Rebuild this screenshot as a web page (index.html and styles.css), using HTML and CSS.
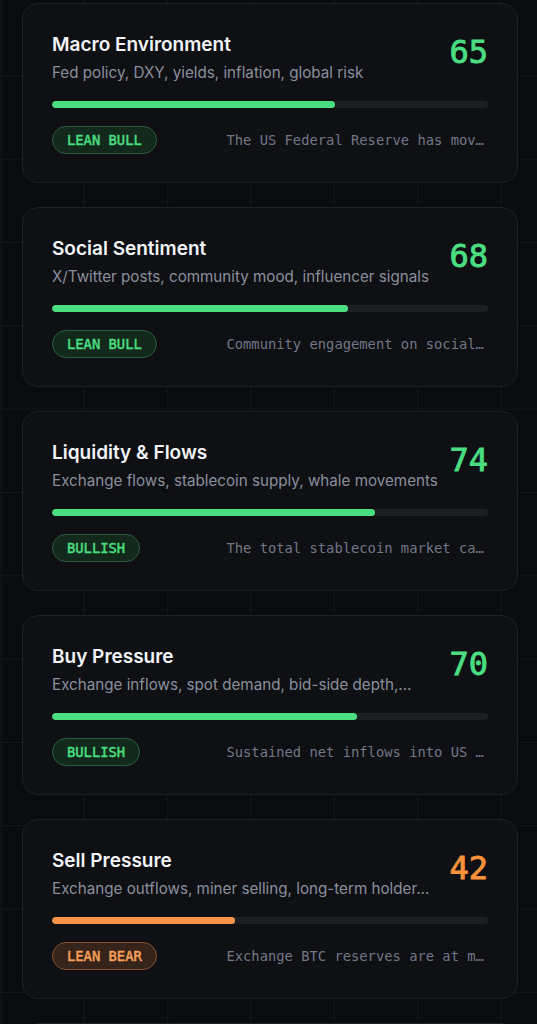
FILE: index.html
```html
<!DOCTYPE html>
<html>
<head>
  <title>Market Signals</title>
  <meta charset="UTF-8">
  <link rel="stylesheet" href="styles.css">
</head>
<body>
  <div class="feed">
    <div class="card">
      <div class="card-head">
        <div class="card-info">
          <div class="card-title">Macro Environment</div>
          <div class="card-sub">Fed policy, DXY, yields, inflation, global risk</div>
        </div>
        <div class="score bull">65</div>
      </div>
      <div class="bar"><div class="bar-fill bull" style="width:65%"></div></div>
      <div class="card-foot">
        <span class="badge bull">LEAN BULL</span>
        <span class="card-note">The US Federal Reserve has mov…</span>
      </div>
    </div>

    <div class="card">
      <div class="card-head">
        <div class="card-info">
          <div class="card-title">Social Sentiment</div>
          <div class="card-sub">X/Twitter posts, community mood, influencer signals</div>
        </div>
        <div class="score bull">68</div>
      </div>
      <div class="bar"><div class="bar-fill bull" style="width:68%"></div></div>
      <div class="card-foot">
        <span class="badge bull">LEAN BULL</span>
        <span class="card-note">Community engagement on social…</span>
      </div>
    </div>

    <div class="card">
      <div class="card-head">
        <div class="card-info">
          <div class="card-title">Liquidity &amp; Flows</div>
          <div class="card-sub">Exchange flows, stablecoin supply, whale movements</div>
        </div>
        <div class="score bull">74</div>
      </div>
      <div class="bar"><div class="bar-fill bull" style="width:74%"></div></div>
      <div class="card-foot">
        <span class="badge bull">BULLISH</span>
        <span class="card-note">The total stablecoin market ca…</span>
      </div>
    </div>

    <div class="card">
      <div class="card-head">
        <div class="card-info">
          <div class="card-title">Buy Pressure</div>
          <div class="card-sub">Exchange inflows, spot demand, bid-side depth,...</div>
        </div>
        <div class="score bull">70</div>
      </div>
      <div class="bar"><div class="bar-fill bull" style="width:70%"></div></div>
      <div class="card-foot">
        <span class="badge bull">BULLISH</span>
        <span class="card-note">Sustained net inflows into US …</span>
      </div>
    </div>

    <div class="card">
      <div class="card-head">
        <div class="card-info">
          <div class="card-title">Sell Pressure</div>
          <div class="card-sub">Exchange outflows, miner selling, long-term holder...</div>
        </div>
        <div class="score bear">42</div>
      </div>
      <div class="bar"><div class="bar-fill bear" style="width:42%"></div></div>
      <div class="card-foot">
        <span class="badge bear">LEAN BEAR</span>
        <span class="card-note">Exchange BTC reserves are at m…</span>
      </div>
    </div>

    <div class="card">
      <div class="card-head">
        <div class="card-info">
          <div class="card-title">On-Chain Activity</div>
          <div class="card-sub">Active addresses, transaction volume, fees</div>
        </div>
        <div class="score bull">61</div>
      </div>
      <div class="bar"><div class="bar-fill bull" style="width:61%"></div></div>
      <div class="card-foot">
        <span class="badge bull">LEAN BULL</span>
        <span class="card-note">Active addresses are trending…</span>
      </div>
    </div>
  </div>
</body>
</html>
```

FILE: styles.css
```css
body {
  margin: 0;
  background-color: #0a0b0e;
  background-image:
    linear-gradient(to right, #15171c 1px, transparent 1px),
    linear-gradient(to bottom, #15171c 1px, transparent 1px);
  background-size: 83.33px 83.33px;
  background-position: 0.5px -8px;
  font-family: Inter, "Noto Sans", sans-serif;
  color: #f1f3f5;
  overflow: hidden;
}
.feed {
  display: flex;
  flex-direction: column;
  gap: 24px;
  width: 496px;
  padding: 3px 0 0 22px;
}
.card {
  background-color: #0e1014;
  border: 1px solid #1c1f25;
  border-radius: 16px;
  padding: 29px 29px 28px 29px;
  display: flex;
  flex-direction: column;
}
.card-head {
  display: flex;
  justify-content: space-between;
  align-items: flex-start;
  gap: 12px;
}
.card-info {
  flex: 1;
  min-width: 0;
}
.card-title {
  font-size: 19px;
  line-height: 24px;
  font-weight: 600;
  color: #f2f4f7;
}
.card-sub {
  margin-top: 6px;
  font-size: 15.2px;
  line-height: 20px;
  color: #8a8f9d;
  white-space: nowrap;
}
.score {
  margin-top: 3px;
  font-family: "DejaVu Sans Mono", monospace;
  font-size: 32px;
  line-height: 32px;
  font-weight: 400;
  -webkit-text-stroke: 0.9px currentColor;
}
.score.bull {
  color: #4ade80;
}
.score.bear {
  color: #fb923c;
}
.bar {
  margin-top: 18px;
  height: 7px;
  border-radius: 4px;
  background-color: #1c1e23;
  overflow: hidden;
}
.bar-fill {
  height: 100%;
  border-radius: 4px;
}
.bar-fill.bull {
  background-color: #4ade80;
}
.bar-fill.bear {
  background-color: #f7934a;
}
.card-foot {
  margin-top: 18px;
  display: flex;
  align-items: center;
  justify-content: space-between;
  gap: 12px;
}
.badge {
  height: 28px;
  box-sizing: border-box;
  display: inline-flex;
  align-items: center;
  padding: 0 14px;
  border-radius: 14px;
  font-family: "DejaVu Sans Mono", monospace;
  font-size: 13.8px;
  font-weight: 400;
  -webkit-text-stroke: 0.5px currentColor;
  white-space: nowrap;
}
.badge.bull {
  background-color: #12291b;
  border: 1px solid #2d5c3c;
  color: #4ade80;
}
.badge.bear {
  background-color: #36241a;
  border: 1px solid #83512e;
  color: #f7a05a;
}
.card-note {
  width: 60%;
  font-family: "DejaVu Sans Mono", monospace;
  font-size: 13.8px;
  color: #727787;
  white-space: nowrap;
}
```
